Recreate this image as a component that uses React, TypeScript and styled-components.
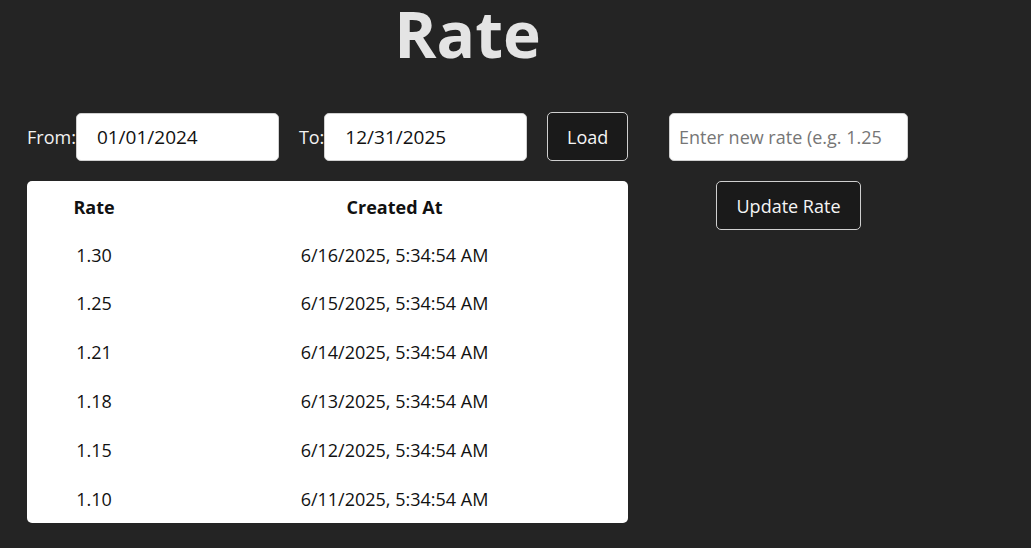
import React from "react";
import styled, { createGlobalStyle } from "styled-components";

const GlobalStyle = createGlobalStyle`
  html, body {
    margin: 0;
    padding: 0;
    background: #242424;
  }
  body {
    font-family: "Open Sans", "Noto Sans", sans-serif;
    color: rgba(255, 255, 255, 0.87);
  }
  * { box-sizing: border-box; }
`;

const Page = styled.div`
  width: 1031px;
  height: 548px;
  overflow: hidden;
  padding: 2px 0 0 27px;
`;

const Container = styled.div`
  width: 881px;
`;

const Title = styled.h1`
  margin: 0 0 46px;
  height: 64px;
  font-size: 64px;
  line-height: 1;
  font-weight: 700;
  text-align: center;
  color: #e4e4e4;
`;

const Main = styled.div`
  display: flex;
  align-items: flex-start;
  gap: 41px;
`;

const LeftCol = styled.div`
  width: 601px;
  display: flex;
  flex-direction: column;
  gap: 20px;
`;

const Controls = styled.div`
  display: flex;
  align-items: center;
  gap: 20px;
  height: 49px;
`;

const Field = styled.label`
  display: flex;
  align-items: center;
  font-size: 18px;
  color: #f2f2f2;
`;

const Input = styled.input<{ $w: number; $pad: number; $fs: number }>`
  width: ${(p) => p.$w}px;
  height: 48px;
  padding: 0 4px 0 ${(p) => p.$pad}px;
  border: 1px solid #d0d0d0;
  border-radius: 5px;
  background: #ffffff;
  color: #111;
  font-family: "Open Sans", sans-serif;
  font-size: ${(p) => p.$fs}px;
  outline: none;
  &::placeholder {
    color: #767676;
  }
`;

const Button = styled.button<{ $w: number }>`
  width: ${(p) => p.$w}px;
  height: 49px;
  border: 1px solid #cfcfcf;
  border-radius: 5px;
  background: #1a1a1a;
  color: #f5f5f5;
  font-family: "Open Sans", sans-serif;
  font-size: 18px;
  cursor: pointer;
  padding: 0;
`;

const Table = styled.table`
  width: 601px;
  background: #ffffff;
  border-radius: 5px;
  border-collapse: separate;
  border-spacing: 0;
  color: #111;
  font-size: 18px;
`;

const Row = styled.tr`
  height: 48.8px;
`;

const HeadCell = styled.th<{ $w?: number }>`
  padding: 3px 0 0;
  font-weight: 700;
  text-align: center;
  width: ${(p) => (p.$w ? `${p.$w}px` : "auto")};
`;

const Cell = styled.td`
  padding: 1px 0 0;
  text-align: center;
`;

const RightCol = styled.div`
  width: 239px;
  margin-top: 1px;
  display: flex;
  flex-direction: column;
  align-items: center;
  gap: 20px;
`;

const rows = [
  ["1.30", "6/16/2025, 5:34:54 AM"],
  ["1.25", "6/15/2025, 5:34:54 AM"],
  ["1.21", "6/14/2025, 5:34:54 AM"],
  ["1.18", "6/13/2025, 5:34:54 AM"],
  ["1.15", "6/12/2025, 5:34:54 AM"],
  ["1.10", "6/11/2025, 5:34:54 AM"],
];

export default function App() {
  return (
    <>
      <GlobalStyle />
      <Page>
        <Container>
          <Title>Rate</Title>
          <Main>
            <LeftCol>
              <Controls>
                <Field>
                  From:
                  <Input $w={203} $pad={20} $fs={19} type="text" defaultValue="01/01/2024" />
                </Field>
                <Field>
                  To:
                  <Input $w={203} $pad={20} $fs={19} type="text" defaultValue="12/31/2025" />
                </Field>
                <Button $w={82}>Load</Button>
              </Controls>
              <Table>
                <thead>
                  <Row>
                    <HeadCell $w={134}>Rate</HeadCell>
                    <HeadCell>Created At</HeadCell>
                  </Row>
                </thead>
                <tbody>
                  {rows.map(([r, d]) => (
                    <Row key={d}>
                      <Cell>{r}</Cell>
                      <Cell>{d}</Cell>
                    </Row>
                  ))}
                </tbody>
              </Table>
            </LeftCol>
            <RightCol>
              <Input $w={239} $pad={9} $fs={18} type="text" placeholder="Enter new rate (e.g. 1.25" />
              <Button $w={145}>Update Rate</Button>
            </RightCol>
          </Main>
        </Container>
      </Page>
    </>
  );
}
